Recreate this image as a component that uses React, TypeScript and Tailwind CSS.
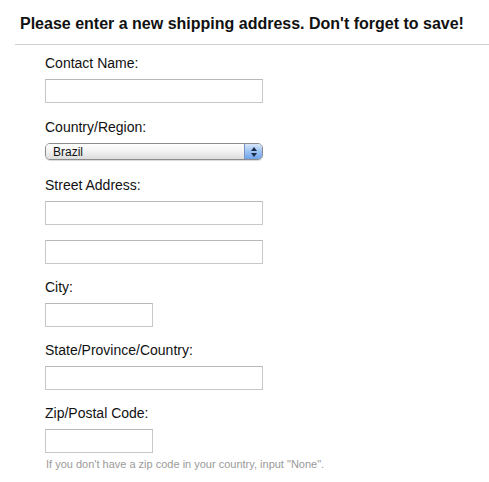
const font = { fontFamily: '"Liberation Sans", Arial, Helvetica, sans-serif' }

function Label({ children }: { children: React.ReactNode }) {
  return <div className="text-[14px] leading-4 text-[#111]">{children}</div>
}

function TextBox({ width }: { width: string }) {
  return <div className={`mt-2 h-6 border border-[#c8c8c8] border-t-[#b8b8b8] bg-white ${width}`} />
}

function SelectBox({ value }: { value: string }) {
  return (
    <div className="mt-2 flex h-[17px] w-[218px] overflow-hidden rounded-[5px] border border-[#8c8c8c] shadow-[0_1px_1px_rgba(0,0,0,0.15)]">
      <div className="flex flex-1 items-center bg-gradient-to-b from-white via-[#f2f2f2] to-[#dcdcdc] pl-[7px] text-[12px] leading-none text-[#111]">
        {value}
      </div>
      <div className="flex w-[18px] flex-col items-center justify-center gap-[2px] border-l border-[#7a93c0] bg-gradient-to-b from-[#d6e6fa] via-[#9cc2f2] to-[#6fa3ea]">
        <svg width="6" height="4" viewBox="0 0 6 4">
          <path d="M3 0 L6 4 L0 4 Z" fill="#1c2a4a" />
        </svg>
        <svg width="6" height="4" viewBox="0 0 6 4">
          <path d="M0 0 L6 0 L3 4 Z" fill="#1c2a4a" />
        </svg>
      </div>
    </div>
  )
}

export default function App() {
  return (
    <div className="min-h-[482px] w-[489px] bg-white" style={font}>
      <div className="pl-[15px] pt-[14px]">
        <h1 className="pl-[5px] text-[16px] font-bold leading-5 text-[#111]">
          Please enter a new shipping address. Don't forget to save!
        </h1>
        <div className="mt-[10px] h-px bg-[#cfcfcf]" />
      </div>

      <form className="flex flex-col pl-[45px] pt-[10px]">
        <div>
          <Label>Contact Name:</Label>
          <TextBox width="w-[218px]" />
        </div>
        <div className="mt-4">
          <Label>Country/Region:</Label>
          <SelectBox value="Brazil" />
        </div>
        <div className="mt-[17px]">
          <Label>Street Address:</Label>
          <TextBox width="w-[218px]" />
          <div className="mt-[15px] h-6 w-[218px] border border-[#c8c8c8] border-t-[#b8b8b8] bg-white" />
        </div>
        <div className="mt-[15px]">
          <Label>City:</Label>
          <TextBox width="w-[108px]" />
        </div>
        <div className="mt-[15px]">
          <Label>State/Province/Country:</Label>
          <TextBox width="w-[218px]" />
        </div>
        <div className="mt-[15px]">
          <Label>Zip/Postal Code:</Label>
          <TextBox width="w-[108px]" />
          <p className="mt-[5px] pl-px text-[11px] leading-[13px] text-[#9a9a9a]">
            If you don't have a zip code in your country, input "None".
          </p>
        </div>
      </form>
    </div>
  )
}
